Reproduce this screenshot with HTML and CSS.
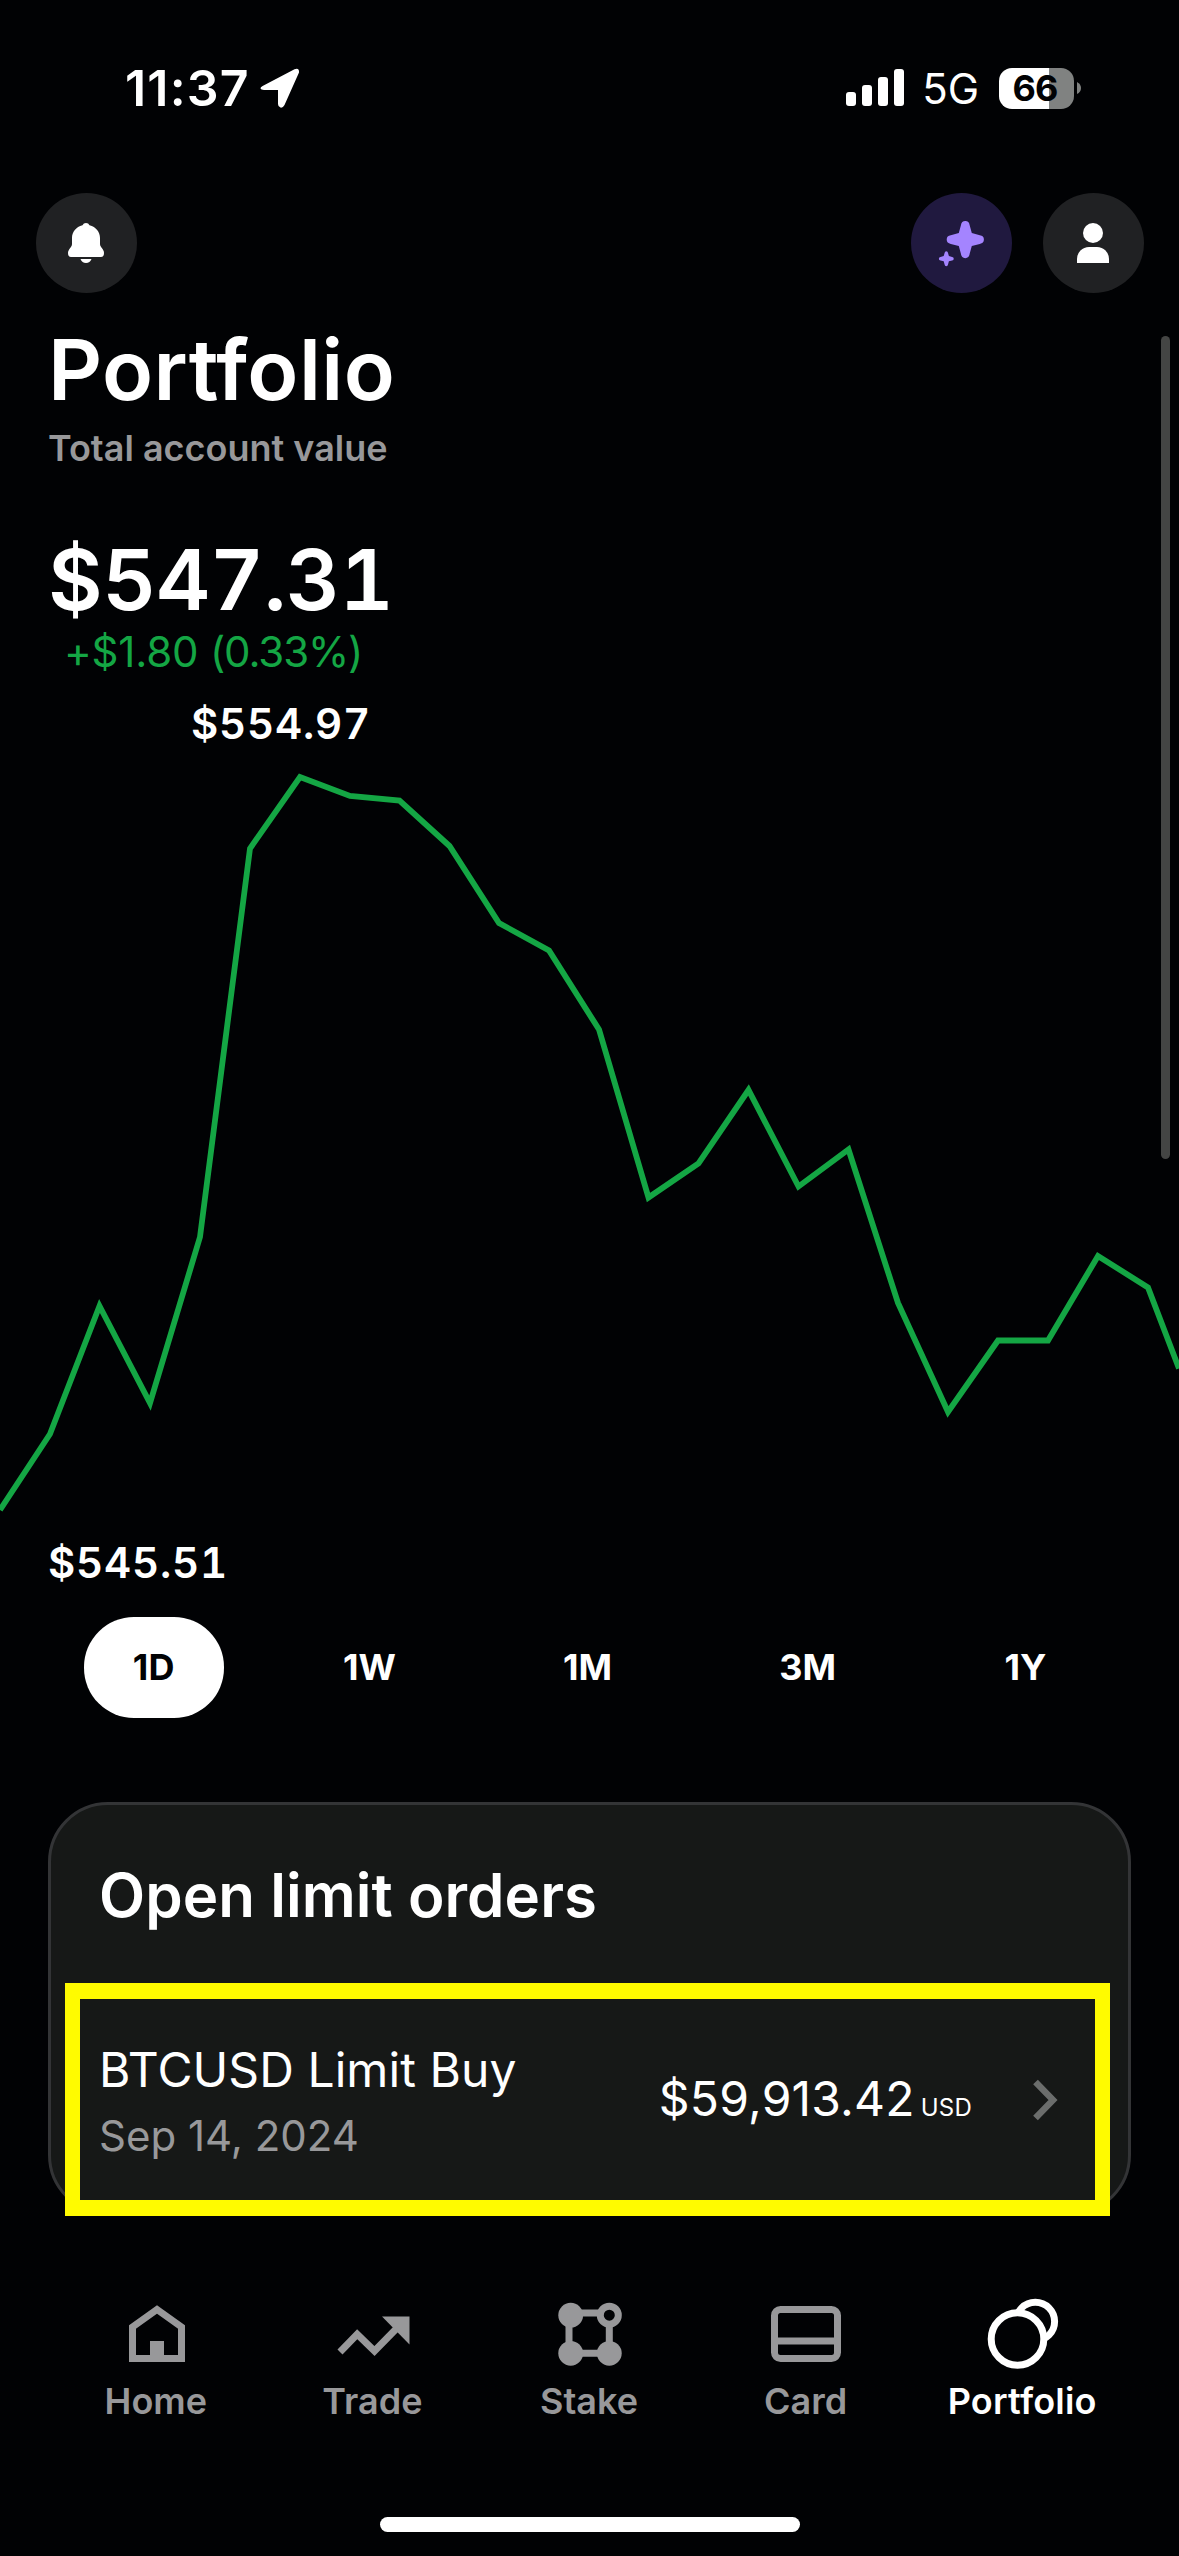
FILE: index.html
```
<!DOCTYPE html>
<html lang="en">
<head>
<meta charset="utf-8">
<title>Portfolio</title>
<link rel="stylesheet" href="styles.css">
</head>
<body>
<div class="screen">
  <div class="status">
    <div class="status-left">
      <span class="time">11:37</span>
      <svg class="location" width="40" height="40" viewBox="0 0 40 40"><path d="M2.600 18 34.500 1.200Q39.500-.6 39 4.600L24.500 37Q23 40 20.500 39.600 18 39 18 36V22H4Q.8 21.800.5 20.500.3 19 2.600 18Z" fill="#fff"/></svg>
    </div>
    <div class="status-right">
      <div class="signal"><i class="bar bar-1"></i><i class="bar bar-2"></i><i class="bar bar-3"></i><i class="bar bar-4"></i></div>
      <span class="network">5G</span>
      <div class="battery">66</div>
      <svg class="nub" width="4" height="12" viewBox="0 0 4 12"><path d="M0 0Q4 2 4 6T0 12Z" fill="#808281"/></svg>
    </div>
  </div>

  <header class="header">
    <div class="round">
      <svg width="100" height="100" viewBox="0 0 100 100" fill="#fff"><path d="M46.500 32.200Q47.500 30 50 30T53.500 32.200C60 33.800 64 39 64 45V51C64 54.500 68 56 68 60Q68 64 65 64H35Q32 64 32 60C32 56 36 54.500 36 51V45C36 39 40 33.800 46.500 32.200Z"/><path d="M44.500 66H55.500Q54 70 50 70T44.500 66Z"/></svg>
    </div>
    <div class="header-right">
      <div class="round round-purple">
        <svg width="100" height="100" viewBox="0 0 100 100" fill="#a484ff">
          <defs><path id="spark" d="M-4.300-14.500Q-3.800-18.600 0-18.600T4.300-14.500L6.500-6.500 14.500-4.300Q18.600-3.800 18.600 0T14.500 4.300L6.500 6.500 4.300 14.500Q3.800 18.600 0 18.600T-4.300 14.500L-6.500 6.500-14.500 4.300Q-18.600 3.800-18.600 0T-14.500-4.300L-6.500-6.500Z"/></defs>
          <use href="#spark" transform="translate(53.300 46.600)"/>
          <use href="#spark" transform="translate(34.300 65.700) scale(.4)"/>
        </svg>
      </div>
      <div class="round">
        <svg width="100" height="100" viewBox="0 0 100 100" fill="#fff"><circle cx="50" cy="40" r="10"/><path d="M34 70V66A12 12 0 0 1 46 54H54A12 12 0 0 1 66 66V70Z"/></svg>
      </div>
    </div>
  </header>

  <main class="main">
    <h1 class="title">Portfolio</h1>
    <p class="subtitle">Total account value</p>
    <p class="value">$547.31</p>
    <p class="change">+$1.80 <span class="change-percent">(0.33%)</span></p>
    <p class="high">$554.97</p>
    <svg class="chart" width="1179" height="789" viewBox="0 749 1179 789">
      <polyline fill="none" stroke="#14a644" stroke-width="5.800" stroke-miterlimit="10" points="0,1510 50,1434 99.500,1306 150,1403 200,1237 250,848.500 300,777 350,796 399.500,800.500 449.500,846 499,923 549,950.500 599,1029.500 648.500,1197.500 698.500,1163.500 748.500,1090 798.500,1186.500 848.500,1149.500 898,1303 948,1412 998,1340.500 1048,1340.500 1098,1256 1148,1287.500 1179,1368.500"/>
    </svg>
    <p class="low">$545.51</p>
    <div class="tabs">
      <button class="tab tab-active">1D</button>
      <button class="tab">1W</button>
      <button class="tab">1M</button>
      <button class="tab">3M</button>
      <button class="tab">1Y</button>
    </div>

    <section class="card">
      <h2 class="card-title">Open limit orders</h2>
      <div class="order">
        <div class="order-text">
          <div class="order-name">BTCUSD Limit Buy</div>
          <div class="order-date">Sep 14, 2024</div>
        </div>
        <div class="order-amount">$59,913.42<span class="order-unit">USD</span></div>
        <svg class="chevron" width="24" height="42" viewBox="0 0 24 42"><path d="M2.500 3 20 21 2.500 39" fill="none" stroke="#6b6d6c" stroke-width="6.500"/></svg>
      </div>
      <div class="highlight"></div>
    </section>
  </main>

  <nav class="nav">
    <a class="nav-item">
      <svg class="nav-icon" viewBox="0 0 72 72"><path d="M12.500 60.500V29L37 11.500 61.500 29V60.500Z" fill="none" stroke="currentColor" stroke-width="7"/><path d="M30 43H44V62H30Z" fill="currentColor"/></svg>
      <span class="nav-label">Home</span>
    </a>
    <a class="nav-item">
      <svg class="nav-icon" viewBox="0 0 72 72"><path d="M3 54 20.200 36.300 37.500 53 62 28" fill="none" stroke="currentColor" stroke-width="7"/><path d="M45 18.500H72.500V46.500Z" fill="currentColor"/></svg>
      <span class="nav-label">Trade</span>
    </a>
    <a class="nav-item">
      <svg class="nav-icon" viewBox="0 0 72 72"><g fill="none" stroke="currentColor" stroke-width="7"><path d="M17.500 15H46M17.500 55.300H56M16 17V55M56.300 27V55"/><circle cx="56.300" cy="17.200" r="9"/></g><g fill="currentColor"><circle cx="17.700" cy="17.200" r="12.400"/><circle cx="17.700" cy="55.300" r="12.400"/><circle cx="56.300" cy="55.300" r="12.400"/></g></svg>
      <span class="nav-label">Stake</span>
    </a>
    <a class="nav-item">
      <svg class="nav-icon" viewBox="0 0 72 72"><rect x="4.500" y="11.500" width="63" height="49" rx="6" fill="none" stroke="currentColor" stroke-width="7"/><path d="M4 43H68" stroke="currentColor" stroke-width="7"/></svg>
      <span class="nav-label">Card</span>
    </a>
    <a class="nav-item nav-active">
      <svg class="nav-icon" viewBox="0 0 72 72" fill="#010204" stroke="currentColor" stroke-width="7"><circle cx="48.300" cy="23.500" r="19.300"/><circle cx="30.500" cy="41" r="26.300"/></svg>
      <span class="nav-label">Portfolio</span>
    </a>
  </nav>
  <div class="home-bar"></div>
  <div class="scrollbar"></div>
</div>
</body>
</html>
```
FILE: styles.css
```
* { box-sizing: border-box; margin: 0; padding: 0; }

body {
  background: #010204;
  color: #fff;
  font-family: Inter, "Liberation Sans", sans-serif;
}

svg { display: block; overflow: visible; }

.screen {
  position: relative;
  width: 1179px;
  height: 2556px;
  display: flex;
  flex-direction: column;
  overflow: hidden;
}

/* Status bar */
.status {
  height: 176px;
  padding: 0 98px 0 125px;
  display: flex;
  justify-content: space-between;
  align-items: center;
}
.status-left, .status-right { display: flex; align-items: center; }
.time { font-size: 50px; font-weight: 600; letter-spacing: 1.2px; line-height: 60px; }
.location { margin-left: 10px; }
.signal { display: flex; align-items: flex-end; gap: 6px; height: 38px; padding-bottom: 1px; }
.bar { width: 10px; border-radius: 3px; background: #fff; }
.bar-1 { height: 14px; }
.bar-2 { height: 21px; }
.bar-3 { height: 29px; }
.bar-4 { height: 37px; }
.network { margin-left: 18px; font-size: 42px; line-height: 52px; padding-top: 2px; }
.battery {
  width: 75px;
  height: 41px;
  margin-left: 20px;
  padding-right: 3px;
  border-radius: 13px;
  background: linear-gradient(90deg, #fff 50px, #808281 50px);
  color: #010204;
  font-size: 36px;
  font-weight: 700;
  letter-spacing: -1px;
  line-height: 41px;
  text-align: center;
}
.nub { margin-left: 3px; }

/* Header buttons */
.header {
  height: 117px;
  padding: 17px 35px 0 36px;
  display: flex;
  justify-content: space-between;
}
.header-right { display: flex; gap: 31px; }
.round {
  width: 101px;
  height: 100px;
  display: flex;
  border-radius: 50%;
  background: #202123;
}
.round-purple { justify-content: flex-end; background: #20193f; }

/* Balance */
.title { margin: 26px 0 0 48px; font-size: 84px; font-weight: 600; line-height: 101px; letter-spacing: 0.4px; }
.subtitle { margin: 1px 0 0 48px; font-size: 36px; font-weight: 600; line-height: 54px; color: #98989a; }
.value { margin: 56px 0 0 48px; font-size: 84px; font-weight: 600; line-height: 97px; letter-spacing: -0.5px; font-variant-numeric: tabular-nums; }
.change { margin-left: 64px; font-size: 42px; line-height: 47px; letter-spacing: -0.2px; color: #14a644; }
.change-percent { letter-spacing: -1.1px; }
.high, .low { font-size: 42px; font-weight: 600; line-height: 50px; letter-spacing: 0.8px; font-variant-numeric: tabular-nums; }
.high { margin: 24px 0 0 191px; }
.low { margin-left: 48px; }

/* Range tabs */
.tabs { margin: 29px 48px 0; display: flex; justify-content: space-around; }
.tab {
  min-width: 140px;
  height: 101px;
  padding: 0 48px;
  border: 0;
  border-radius: 50px;
  background: none;
  color: #fff;
  font: 700 36px/101px Inter, "Liberation Sans", sans-serif;
}
.tab-active { background: #fff; color: #010204; }

/* Orders card */
.card {
  position: relative;
  height: 413px;
  margin: 84px 48px 0;
  padding: 50px 71px 0 48px;
  border: 3px solid #333436;
  border-radius: 60px;
  background: #161817;
}
.card-title { font-size: 60px; font-weight: 600; line-height: 80px; letter-spacing: 0.06px; }
.order { margin-top: 102px; display: flex; align-items: center; }
.order-text { flex: 1; }
.order-name { font-size: 48px; line-height: 66px; letter-spacing: 0.07px; }
.order-date { font-size: 42px; line-height: 66px; color: #98989a; }
.order-amount { font-size: 48px; line-height: 58px; letter-spacing: 0.2px; }
.order-unit { margin-left: 6px; font-size: 24px; }
.chevron { margin: 0 0 6px 61px; }
.highlight {
  position: absolute;
  left: 14px;
  top: 178px;
  width: 1045px;
  height: 233px;
  border: 16px solid #fffb00;
  border-width: 16px 15px;
}

/* Bottom navigation */
.nav { margin: 83px 48px 0; display: grid; grid-template-columns: repeat(5, 1fr); }
.nav-item {
  display: flex;
  flex-direction: column;
  align-items: center;
  gap: 9px;
  color: #98989a;
  font-size: 36px;
  font-weight: 600;
  line-height: 44px;
}
.nav-active { color: #fff; letter-spacing: 0.2px; }
.nav-icon { width: 72px; height: 72px; }
.nav-label { margin-right: 1px; }
.home-bar { width: 420px; height: 15px; margin: 94px auto 0; border-radius: 8px; background: #fff; }

.scrollbar {
  position: absolute;
  left: 1161px;
  top: 336px;
  width: 9px;
  height: 823px;
  border-radius: 5px;
  background: #444544;
}
```
